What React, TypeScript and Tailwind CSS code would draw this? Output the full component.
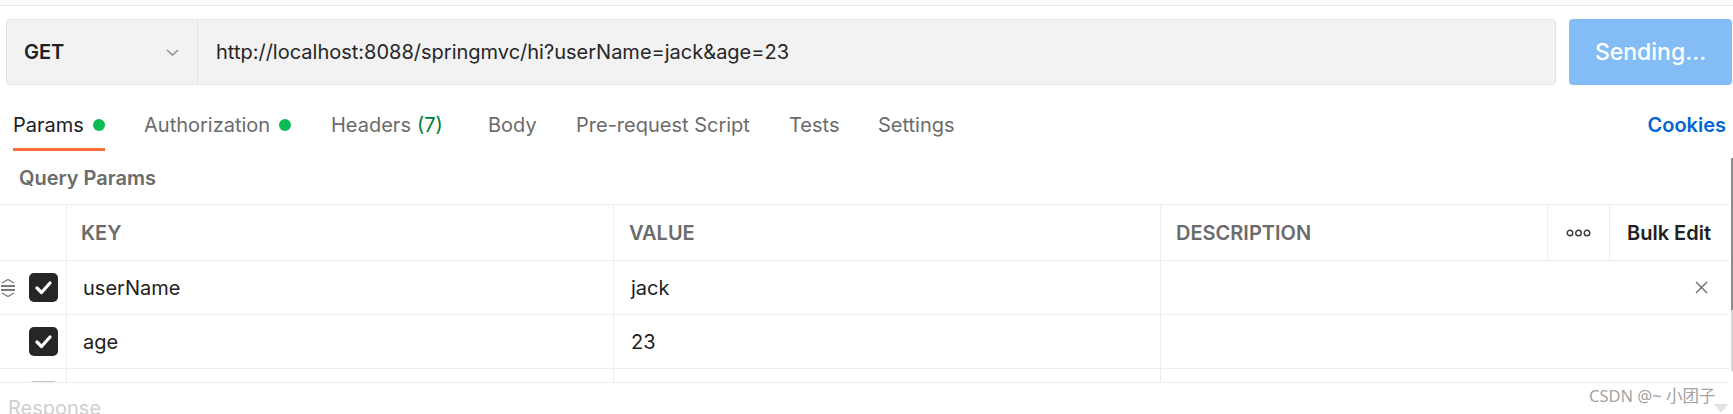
import React from "react";

interface Tab {
  name: string;
  width: string;
  dot?: boolean;
  count?: string;
  active?: boolean;
}

const tabs: Tab[] = [
  { name: "Params", width: "w-[131px]", dot: true, active: true },
  { name: "Authorization", width: "w-[187px]", dot: true },
  { name: "Headers", width: "w-[157px]", count: "(7)" },
  { name: "Body", width: "w-[88px]" },
  { name: "Pre-request Script", width: "w-[213px]" },
  { name: "Tests", width: "w-[89px]" },
  { name: "Settings", width: "w-[120px]" },
];

const params = [
  { key: "userName", value: "jack", handle: true },
  { key: "age", value: "23", handle: false },
];

function Checkbox({ checked }: { checked: boolean }) {
  if (!checked) {
    return <div className="h-[29px] w-[29px] rounded-[5px] border-2 border-[#c8c8c8] bg-white" />;
  }
  return (
    <svg width="29" height="29" viewBox="0 0 29 29">
      <rect x="0" y="0" width="29" height="29" rx="5" fill="#262626" />
      <polyline
        points="8,15 12.5,19.5 21,10"
        fill="none"
        stroke="#ffffff"
        strokeWidth="3.2"
        strokeLinecap="round"
        strokeLinejoin="round"
      />
    </svg>
  );
}

function DragHandle({ show }: { show: boolean }) {
  return (
    <svg width="16" height="20" viewBox="0 0 16 20" className={show ? "" : "invisible"}>
      <polyline points="2,5 8,1.5 14,5" fill="none" stroke="#7a7a7a" strokeWidth="1.4" />
      <line x1="1" y1="8" x2="15" y2="8" stroke="#7a7a7a" strokeWidth="2" />
      <line x1="1" y1="12" x2="15" y2="12" stroke="#7a7a7a" strokeWidth="2" />
      <polyline points="2,15 8,18.5 14,15" fill="none" stroke="#7a7a7a" strokeWidth="1.4" />
    </svg>
  );
}

export default function App() {
  return (
    <div className="relative h-[414px] w-[1733px] overflow-hidden bg-white font-['Inter',sans-serif] text-[#212121]">
      <div className="h-[6px] border-b border-[#e8e8e8]" />

      {/* request bar */}
      <div className="mt-[13px] flex h-[66px] pl-[6px]">
        <div className="flex w-[1550px] rounded-[4px] border border-[#e3e3e3] bg-[#f2f2f2]">
          <div className="flex w-[191px] items-center justify-between border-r border-[#e3e3e3] pl-[17px] pr-[18px]">
            <span className="text-[20px] font-semibold">GET</span>
            <svg width="13" height="7" viewBox="0 0 13 7">
              <polyline points="1,1 6.5,6 12,1" fill="none" stroke="#8a8a8a" strokeWidth="1.3" />
            </svg>
          </div>
          <div className="flex items-center pl-[18px] text-[20px] text-[#262626]">
            http://localhost:8088/springmvc/hi?userName=jack&amp;age=23
          </div>
        </div>
        <button className="ml-[13px] flex w-[163px] items-center justify-center rounded-[4px] bg-[#84bdf6] text-[23px] font-medium text-white">
          Sending...
        </button>
      </div>

      {/* tabs */}
      <div className="mt-[28px] flex items-start justify-between pl-[13px] pr-[7px]">
        <div className="flex">
          {tabs.map((tab) => (
            <div key={tab.name} className={`${tab.width} flex`}>
              <div
                className={`flex h-[38px] items-start border-b-[3px] ${
                  tab.active ? "border-[#ff6c37] text-[#212121]" : "border-transparent text-[#6b6b6b]"
                }`}
              >
                <span className="text-[20px] leading-[24px]">{tab.name}</span>
                {tab.count && (
                  <span className="ml-[6px] text-[20px] leading-[24px] text-[#007f31]">{tab.count}</span>
                )}
                {tab.dot && <span className="ml-[9px] mt-[6px] h-[12px] w-[12px] rounded-full bg-[#0cbb52]" />}
              </div>
            </div>
          ))}
        </div>
        <span className="text-[20px] font-semibold leading-[24px] text-[#0265d2]">Cookies</span>
      </div>

      {/* query params */}
      <div className="relative">
        <div className="pl-[19px] pt-[15px] text-[20px] font-semibold leading-[24px] text-[#6b6b6b]">
          Query Params
        </div>

        <div className="mt-[14px] h-[179px] w-[1729px] overflow-hidden border-b border-[#ededed]">
          {/* header row */}
          <div className="flex h-[56px] border-t border-[#ededed] text-[20px] font-semibold text-[#6b6b6b]">
            <div className="w-[67px] border-r border-[#ededed]" />
            <div className="flex w-[547px] items-center border-r border-[#ededed] pl-[14px]">KEY</div>
            <div className="flex w-[547px] items-center border-r border-[#ededed] pl-[15px]">VALUE</div>
            <div className="flex w-[387px] items-center border-r border-[#ededed] pl-[15px]">DESCRIPTION</div>
            <div className="flex w-[62px] items-center justify-center border-r border-[#ededed]">
              <svg width="25" height="8" viewBox="0 0 25 8">
                <circle cx="4" cy="4" r="2.8" fill="none" stroke="#3a3a3a" strokeWidth="1.4" />
                <circle cx="12.5" cy="4" r="2.8" fill="none" stroke="#3a3a3a" strokeWidth="1.4" />
                <circle cx="21" cy="4" r="2.8" fill="none" stroke="#3a3a3a" strokeWidth="1.4" />
              </svg>
            </div>
            <div className="flex flex-1 items-center pl-[17px] text-[#212121]">Bulk Edit</div>
          </div>

          {params.map((p) => (
            <div key={p.key} className="flex h-[54px] border-t border-[#ededed] text-[20px]">
              <div className="flex w-[67px] items-center border-r border-[#ededed]">
                <DragHandle show={p.handle} />
                <div className="ml-[13px]">
                  <Checkbox checked />
                </div>
              </div>
              <div className="flex w-[547px] items-center border-r border-[#ededed] pl-[16px]">{p.key}</div>
              <div className="flex w-[547px] items-center border-r border-[#ededed] pl-[17px]">{p.value}</div>
              <div className="flex flex-1 items-center justify-end pr-[21px]">
                {p.handle && (
                  <svg width="13" height="13" viewBox="0 0 13 13">
                    <path d="M1 1 L12 12 M12 1 L1 12" stroke="#6b6b6b" strokeWidth="1.4" />
                  </svg>
                )}
              </div>
            </div>
          ))}

          {/* empty row */}
          <div className="flex h-[54px] border-t border-[#ededed]">
            <div className="flex w-[67px] items-center border-r border-[#ededed] pl-[29px]">
              <Checkbox checked={false} />
            </div>
            <div className="w-[547px] border-r border-[#ededed]" />
            <div className="w-[547px] border-r border-[#ededed]" />
            <div className="flex-1" />
          </div>
        </div>

        {/* scrollbar */}
        <div className="absolute right-0 top-[7px] flex h-[213px] w-[2px] flex-col">
          <div className="h-[152px] bg-[#8c8c8c]" />
          <div className="flex-1 bg-[#d6d6d6]" />
        </div>
      </div>

      <div className="mt-[13px] pl-[8px] text-[20px] leading-[24px] text-[#cfcfcf]">Response</div>

      {/* watermark */}
      <div className="absolute left-[1589px] top-[385px] font-['Noto_Sans','Noto_Sans_CJK_SC',sans-serif] text-[16.5px] leading-[22px] text-[#a3a3a3]">
        CSDN @~ 小团子
      </div>
      <div className="absolute left-[1714px] top-[404px] h-0 w-0 border-l-[7px] border-r-[7px] border-t-[9px] border-l-transparent border-r-transparent border-t-[#e3e3e3]" />
    </div>
  );
}
